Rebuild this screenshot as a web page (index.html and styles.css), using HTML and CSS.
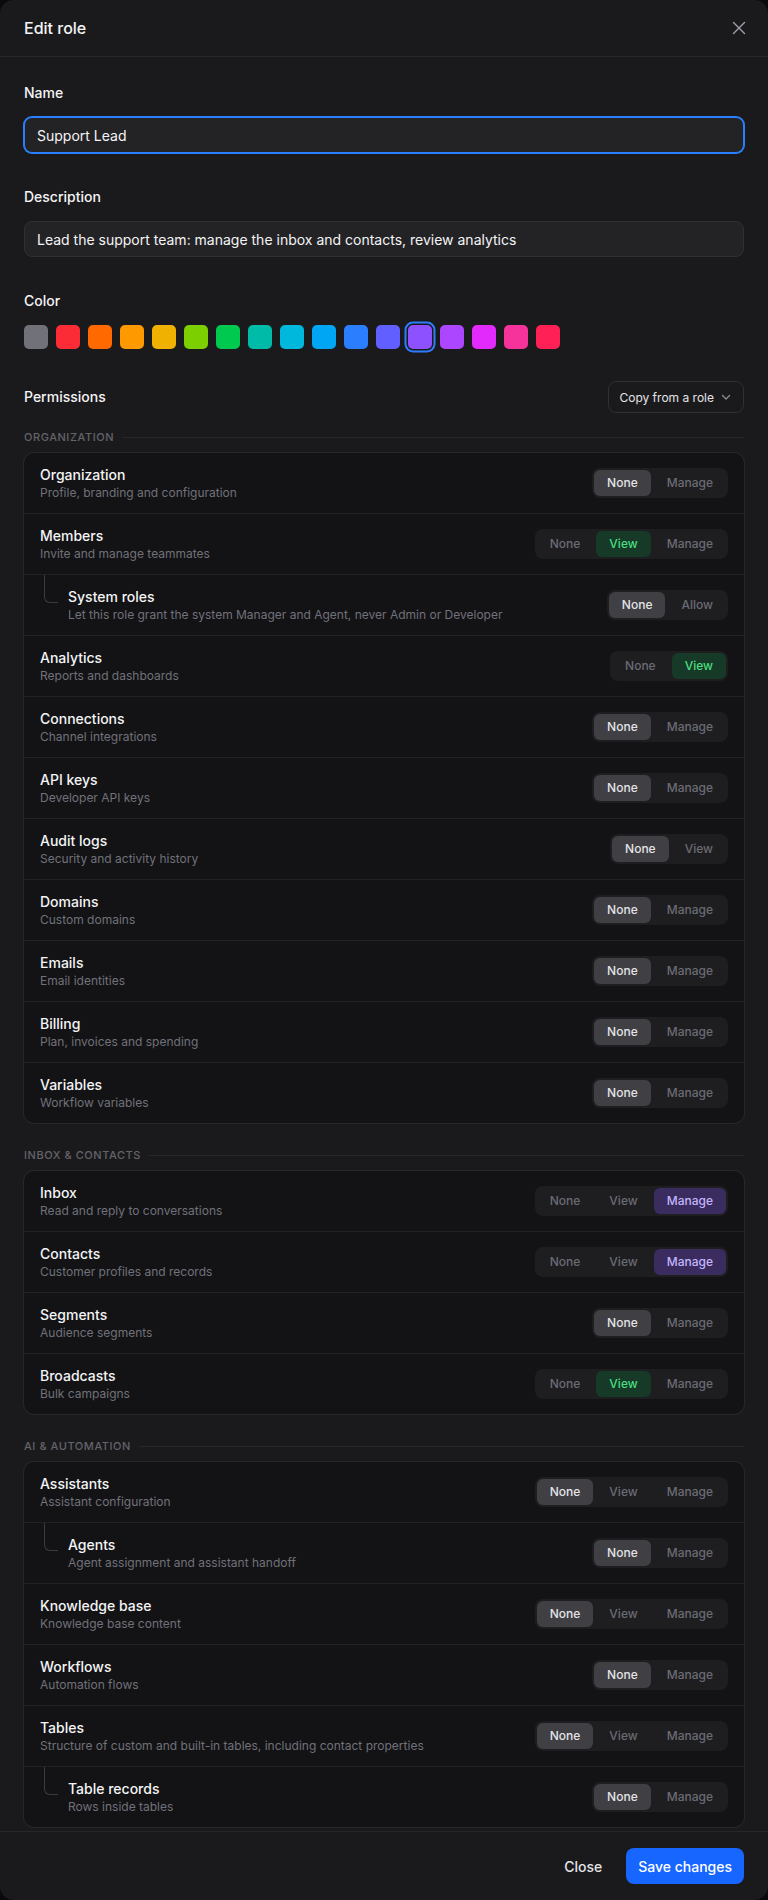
FILE: index.html
```html
<!DOCTYPE html>
<html lang="en">
<head>
<meta charset="utf-8">
<title>Edit role</title>
<link rel="stylesheet" href="styles.css">
</head>
<body>
<div class="modal">
  <header class="modal-header">
    <h1 class="modal-title">Edit role</h1>
    <button class="icon-btn" aria-label="Close">
      <svg width="14" height="14" viewBox="0 0 14 14" fill="none" stroke="currentColor" stroke-width="1.4" stroke-linecap="round"><path d="M1.5 1.5L12.5 12.5M12.5 1.5L1.5 12.5"/></svg>
    </button>
  </header>

  <div class="modal-body">
    <div class="field">
      <label class="field-label">Name</label>
      <input class="text-input focused" value="Support Lead">
    </div>

    <div class="field">
      <label class="field-label">Description</label>
      <input class="text-input" value="Lead the support team: manage the inbox and contacts, review analytics">
    </div>

    <div class="field">
      <label class="field-label">Color</label>
      <div class="swatches">
        <span class="swatch c-gray"></span>
        <span class="swatch c-red"></span>
        <span class="swatch c-orange"></span>
        <span class="swatch c-amber"></span>
        <span class="swatch c-yellow"></span>
        <span class="swatch c-lime"></span>
        <span class="swatch c-green"></span>
        <span class="swatch c-teal"></span>
        <span class="swatch c-cyan"></span>
        <span class="swatch c-sky"></span>
        <span class="swatch c-blue"></span>
        <span class="swatch c-indigo"></span>
        <span class="swatch c-violet selected"></span>
        <span class="swatch c-purple"></span>
        <span class="swatch c-fuchsia"></span>
        <span class="swatch c-pink"></span>
        <span class="swatch c-rose"></span>
      </div>
    </div>

    <div class="perms">
      <div class="perms-head">
        <span class="field-label">Permissions</span>
        <button class="copy-btn">Copy from a role
          <svg width="12" height="12" viewBox="0 0 12 12" fill="none" stroke="currentColor" stroke-width="1.3" stroke-linecap="round" stroke-linejoin="round"><path d="M2.5 4.5L6 8L9.5 4.5"/></svg>
        </button>
      </div>

      <div class="sections">
        <section class="section">
          <div class="section-label"><span>Organization</span><i class="section-line"></i></div>
          <div class="card">
            <div class="row">
              <div class="row-text"><div class="row-title">Organization</div><div class="row-desc">Profile, branding and configuration</div></div>
              <div class="seg"><span class="opt on-none">None</span><span class="opt">Manage</span></div>
            </div>
            <div class="row">
              <div class="row-text"><div class="row-title">Members</div><div class="row-desc">Invite and manage teammates</div></div>
              <div class="seg"><span class="opt">None</span><span class="opt on-view">View</span><span class="opt">Manage</span></div>
            </div>
            <div class="row">
              <div class="row-left"><i class="connector"></i><div class="row-text"><div class="row-title">System roles</div><div class="row-desc">Let this role grant the system Manager and Agent, never Admin or Developer</div></div></div>
              <div class="seg"><span class="opt on-none">None</span><span class="opt">Allow</span></div>
            </div>
            <div class="row">
              <div class="row-text"><div class="row-title">Analytics</div><div class="row-desc">Reports and dashboards</div></div>
              <div class="seg"><span class="opt">None</span><span class="opt on-view">View</span></div>
            </div>
            <div class="row">
              <div class="row-text"><div class="row-title">Connections</div><div class="row-desc">Channel integrations</div></div>
              <div class="seg"><span class="opt on-none">None</span><span class="opt">Manage</span></div>
            </div>
            <div class="row">
              <div class="row-text"><div class="row-title">API keys</div><div class="row-desc">Developer API keys</div></div>
              <div class="seg"><span class="opt on-none">None</span><span class="opt">Manage</span></div>
            </div>
            <div class="row">
              <div class="row-text"><div class="row-title">Audit logs</div><div class="row-desc">Security and activity history</div></div>
              <div class="seg"><span class="opt on-none">None</span><span class="opt">View</span></div>
            </div>
            <div class="row">
              <div class="row-text"><div class="row-title">Domains</div><div class="row-desc">Custom domains</div></div>
              <div class="seg"><span class="opt on-none">None</span><span class="opt">Manage</span></div>
            </div>
            <div class="row">
              <div class="row-text"><div class="row-title">Emails</div><div class="row-desc">Email identities</div></div>
              <div class="seg"><span class="opt on-none">None</span><span class="opt">Manage</span></div>
            </div>
            <div class="row">
              <div class="row-text"><div class="row-title">Billing</div><div class="row-desc">Plan, invoices and spending</div></div>
              <div class="seg"><span class="opt on-none">None</span><span class="opt">Manage</span></div>
            </div>
            <div class="row">
              <div class="row-text"><div class="row-title">Variables</div><div class="row-desc">Workflow variables</div></div>
              <div class="seg"><span class="opt on-none">None</span><span class="opt">Manage</span></div>
            </div>
          </div>
        </section>

        <section class="section">
          <div class="section-label"><span>Inbox &amp; Contacts</span><i class="section-line"></i></div>
          <div class="card">
            <div class="row">
              <div class="row-text"><div class="row-title">Inbox</div><div class="row-desc">Read and reply to conversations</div></div>
              <div class="seg"><span class="opt">None</span><span class="opt">View</span><span class="opt on-manage">Manage</span></div>
            </div>
            <div class="row">
              <div class="row-text"><div class="row-title">Contacts</div><div class="row-desc">Customer profiles and records</div></div>
              <div class="seg"><span class="opt">None</span><span class="opt">View</span><span class="opt on-manage">Manage</span></div>
            </div>
            <div class="row">
              <div class="row-text"><div class="row-title">Segments</div><div class="row-desc">Audience segments</div></div>
              <div class="seg"><span class="opt on-none">None</span><span class="opt">Manage</span></div>
            </div>
            <div class="row">
              <div class="row-text"><div class="row-title">Broadcasts</div><div class="row-desc">Bulk campaigns</div></div>
              <div class="seg"><span class="opt">None</span><span class="opt on-view">View</span><span class="opt">Manage</span></div>
            </div>
          </div>
        </section>

        <section class="section">
          <div class="section-label"><span>AI &amp; Automation</span><i class="section-line"></i></div>
          <div class="card">
            <div class="row">
              <div class="row-text"><div class="row-title">Assistants</div><div class="row-desc">Assistant configuration</div></div>
              <div class="seg"><span class="opt on-none">None</span><span class="opt">View</span><span class="opt">Manage</span></div>
            </div>
            <div class="row">
              <div class="row-left"><i class="connector"></i><div class="row-text"><div class="row-title">Agents</div><div class="row-desc">Agent assignment and assistant handoff</div></div></div>
              <div class="seg"><span class="opt on-none">None</span><span class="opt">Manage</span></div>
            </div>
            <div class="row">
              <div class="row-text"><div class="row-title">Knowledge base</div><div class="row-desc">Knowledge base content</div></div>
              <div class="seg"><span class="opt on-none">None</span><span class="opt">View</span><span class="opt">Manage</span></div>
            </div>
            <div class="row">
              <div class="row-text"><div class="row-title">Workflows</div><div class="row-desc">Automation flows</div></div>
              <div class="seg"><span class="opt on-none">None</span><span class="opt">Manage</span></div>
            </div>
            <div class="row">
              <div class="row-text"><div class="row-title">Tables</div><div class="row-desc">Structure of custom and built-in tables, including contact properties</div></div>
              <div class="seg"><span class="opt on-none">None</span><span class="opt">View</span><span class="opt">Manage</span></div>
            </div>
            <div class="row">
              <div class="row-left"><i class="connector"></i><div class="row-text"><div class="row-title">Table records</div><div class="row-desc">Rows inside tables</div></div></div>
              <div class="seg"><span class="opt on-none">None</span><span class="opt">Manage</span></div>
            </div>
          </div>
        </section>
      </div>
    </div>
  </div>

  <footer class="modal-footer">
    <button class="btn btn-ghost">Close</button>
    <button class="btn btn-primary">Save changes</button>
  </footer>
</div>
</body>
</html>
```

FILE: styles.css
```css
* { box-sizing: border-box; }

html, body {
  margin: 0;
  padding: 0;
}

body {
  background: #0a0a0b;
  font-family: Inter, "Noto Sans", "Liberation Sans", sans-serif;
  color: #f4f4f5;
}

.modal {
  width: 768px;
  height: 1900px;
  display: flex;
  flex-direction: column;
  background: #1a1a1d;
  border-radius: 14px;
  overflow: hidden;
}

.modal-header {
  flex: none;
  height: 57px;
  padding: 0 15px 0 24px;
  display: flex;
  align-items: center;
  justify-content: space-between;
  border-bottom: 1px solid #27272a;
}

.modal-title {
  margin: 0;
  font-size: 16px;
  line-height: 24px;
  font-weight: 450;
  color: #f4f4f5;
}

.icon-btn {
  width: 28px;
  height: 28px;
  display: flex;
  align-items: center;
  justify-content: center;
  padding: 0;
  border: 0;
  background: transparent;
  color: #a1a1aa;
}

.modal-body {
  flex: 1 1 auto;
  min-height: 0;
  overflow: hidden;
  padding: 24px;
  display: flex;
  flex-direction: column;
  gap: 32px;
}

.modal-body > * { flex-shrink: 0; }

.field {
  display: flex;
  flex-direction: column;
  gap: 12px;
}

.field-label {
  font-size: 14px;
  line-height: 24px;
  font-weight: 450;
  color: #f4f4f5;
}

.text-input {
  display: block;
  width: 100%;
  height: 36px;
  padding: 0 12px;
  background: #232326;
  border: 1px solid #303034;
  border-radius: 8px;
  font-family: inherit;
  font-size: 14px;
  color: #f4f4f5;
  outline: none;
}

.text-input.focused {
  border-color: #2b7fff;
  box-shadow: 0 0 0 1px #2b7fff;
}

.swatches {
  display: flex;
  gap: 8px;
}

.swatch {
  width: 24px;
  height: 24px;
  border-radius: 5px;
}

.swatch.selected {
  box-shadow: 0 0 0 1.5px #1a1a1d, 0 0 0 3.5px #2b7fff;
}

.c-gray { background: #71717a; }
.c-red { background: #fb2c36; }
.c-orange { background: #ff6900; }
.c-amber { background: #fe9a00; }
.c-yellow { background: #f0b100; }
.c-lime { background: #7ccf00; }
.c-green { background: #00c950; }
.c-teal { background: #00bba7; }
.c-cyan { background: #00b8db; }
.c-sky { background: #00a6f4; }
.c-blue { background: #2b7fff; }
.c-indigo { background: #615fff; }
.c-violet { background: #8e51ff; }
.c-purple { background: #ad46ff; }
.c-fuchsia { background: #e12afb; }
.c-pink { background: #f6339a; }
.c-rose { background: #ff2056; }

.perms {
  display: flex;
  flex-direction: column;
  gap: 16px;
}

.perms-head {
  display: flex;
  align-items: center;
  justify-content: space-between;
}

.copy-btn {
  height: 32px;
  display: flex;
  align-items: center;
  gap: 6px;
  padding: 0 11px 0 10px;
  background: transparent;
  border: 1px solid #303034;
  border-radius: 8px;
  font-family: inherit;
  font-size: 12px;
  font-weight: 400;
  color: #e4e4e7;
}

.copy-btn svg { color: #8b8b93; }

.sections {
  display: flex;
  flex-direction: column;
  gap: 24px;
}

.section {
  display: flex;
  flex-direction: column;
  gap: 8px;
}

.section-label {
  display: flex;
  align-items: center;
  gap: 8px;
  height: 16px;
  font-size: 11px;
  line-height: 16px;
  font-weight: 450;
  letter-spacing: 0.05em;
  text-transform: uppercase;
  color: #636369;
}

.section-line {
  flex: 1;
  height: 1px;
  background: #27272a;
}

.card {
  background: #131315;
  border-radius: 10px;
  box-shadow: 0 0 0 1px #27272a;
  overflow: hidden;
}

.row {
  display: flex;
  align-items: center;
  justify-content: space-between;
  gap: 16px;
  padding: 12px 16px;
}

.row + .row { border-top: 1px solid #222225; }

.row-left {
  display: flex;
  align-items: flex-start;
}

.connector {
  flex: none;
  width: 14px;
  height: 28px;
  margin: -12px 10px 0 4px;
  border-left: 1px solid #3a3a40;
  border-bottom: 1px solid #3a3a40;
  border-bottom-left-radius: 6px;
}

.row-title {
  font-size: 14px;
  line-height: 20px;
  font-weight: 450;
  color: #f4f4f5;
}

.row-desc {
  font-size: 12px;
  line-height: 16px;
  color: #71717a;
}

.seg {
  flex: none;
  display: flex;
  gap: 3px;
  padding: 2px;
  background: #1e1e21;
  border-radius: 8px;
}

.opt {
  height: 26px;
  padding: 0 13px;
  border-radius: 6px;
  font-size: 12px;
  line-height: 26px;
  font-weight: 450;
  color: #6b6b73;
}

.opt.on-none {
  background: #3f3f44;
  color: #e4e4e7;
}

.opt.on-view {
  background: #163a27;
  color: #4ade80;
}

.opt.on-manage {
  background: #3a2c5f;
  color: #c4b5fd;
}

.modal-footer {
  flex: none;
  display: flex;
  justify-content: flex-end;
  gap: 12px;
  padding: 16px 24px;
  border-top: 1px solid #27272a;
}

.btn {
  height: 36px;
  padding: 0 12px;
  border: 0;
  border-radius: 8px;
  font-family: inherit;
  font-size: 14px;
  font-weight: 450;
}

.btn-ghost {
  background: transparent;
  color: #e4e4e7;
}

.btn-primary {
  background: #1766ff;
  color: #ffffff;
}
```
